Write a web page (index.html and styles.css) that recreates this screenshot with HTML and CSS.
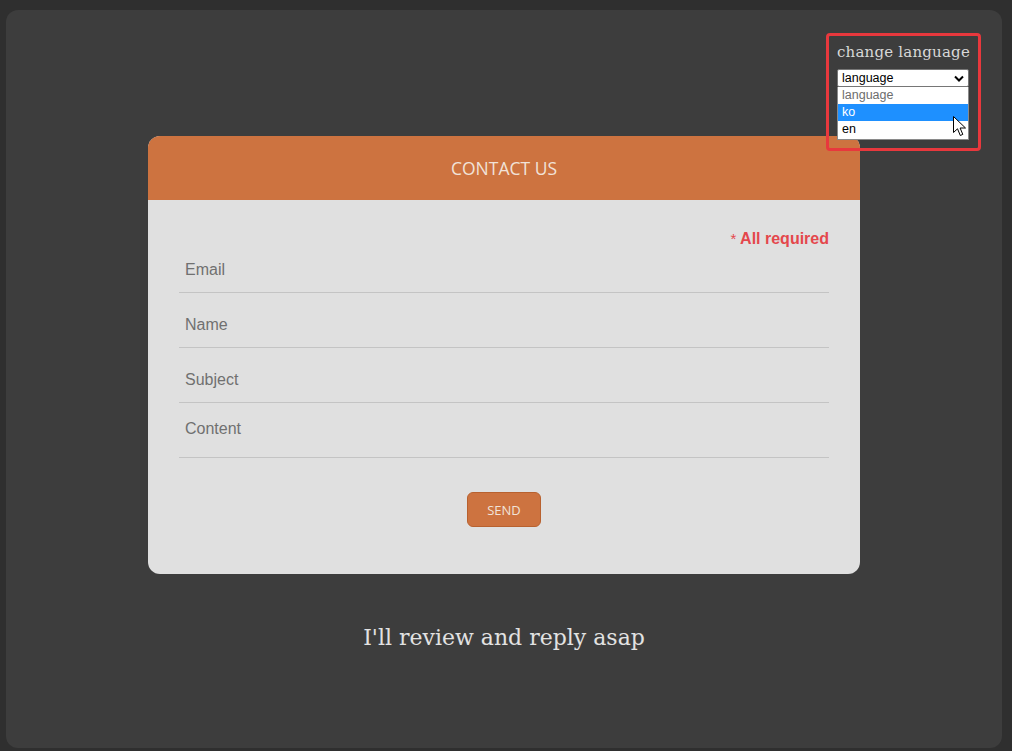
FILE: index.html
```html
<!DOCTYPE html>
<html lang="en">
<head>
<meta charset="utf-8">
<title>Contact</title>
<link rel="stylesheet" href="styles.css">
</head>
<body>
<div class="page">
  <div class="lang">
    <div class="lang-title">change language</div>
    <div class="select">
      <span>language</span>
      <svg class="chev" width="10" height="7" viewBox="0 0 10 7"><path d="M1 1.5 L5 5.5 L9 1.5" fill="none" stroke="#000" stroke-width="2"/></svg>
    </div>
    <div class="options">
      <div class="opt opt-muted">language</div>
      <div class="opt opt-sel">ko</div>
      <div class="opt">en</div>
    </div>
    <svg class="cursor" width="14" height="21" viewBox="0 0 14 21"><path d="M0.5 0.5 L0.5 16.5 L4.5 12.8 L7.3 19.5 L9.8 18.4 L7.1 12 L12.5 12 Z" fill="#fff" stroke="#000" stroke-width="1" stroke-linejoin="round"/></svg>
  </div>

  <div class="card">
    <div class="card-head">CONTACT US</div>
    <div class="card-body">
      <div class="required"><span class="star">*</span> All required</div>
      <div class="field">Email</div>
      <div class="field">Name</div>
      <div class="field">Subject</div>
      <div class="field field-area">Content</div>
      <div class="actions"><button class="send">SEND</button></div>
    </div>
  </div>

  <p class="note">I'll review and reply asap</p>
</div>
</body>
</html>
```
FILE: styles.css
```css
html, body { margin: 0; padding: 0; }
body {
  background: #2f2f2f;
  padding: 10px 10px 3px 6px;
  font-family: "Liberation Sans", Arial, sans-serif;
}
.page {
  position: relative;
  box-sizing: border-box;
  height: 738px;
  background: #3d3d3d;
  border-radius: 12px;
  padding-top: 126px;
  display: flex;
  flex-direction: column;
  align-items: center;
}
.lang {
  position: absolute;
  top: 23px;
  right: 21px;
  width: 149px;
  height: 112px;
  border: 3px solid #e8383d;
  border-radius: 4px;
}
.lang-title {
  font-family: "DejaVu Serif", serif;
  font-size: 15px;
  font-weight: 500;
  color: #d8d8d8;
  margin: 7px 0 0 8px;
  letter-spacing: 0.2px;
  line-height: 18px;
}
.select {
  margin: 8px 0 0 8px;
  width: 132px;
  height: 18px;
  box-sizing: border-box;
  background: #fff;
  border: 1px solid #767676;
  border-radius: 2px;
  display: flex;
  align-items: center;
  justify-content: space-between;
  padding: 0 4px 0 4px;
  font-size: 12.5px;
  color: #000;
}
.options {
  margin-left: 8px;
  width: 132px;
  box-sizing: border-box;
  background: #fff;
  border: 1px solid #8a8a8a;
  border-top: none;
  padding-bottom: 1px;
}
.opt {
  height: 17px;
  line-height: 17px;
  padding-left: 4px;
  font-size: 12.5px;
  color: #000;
}
.opt-muted { color: #6d6d6d; }
.opt-sel { background: #1e90ff; color: #fff; }
.cursor {
  position: absolute;
  left: 124px;
  top: 80px;
}
.card {
  width: 712px;
  border-radius: 12px;
  overflow: hidden;
  background: #e0e0e0;
}
.card-head {
  height: 64px;
  background: #cd7340;
  color: #f1e2d8;
  font-family: "Open Sans", sans-serif;
  font-size: 17.5px;
  display: flex;
  align-items: center;
  justify-content: center;
}
.card-body {
  padding: 28px 31px 47px;
}
.required {
  text-align: right;
  color: #e4474c;
  font-weight: bold;
  font-size: 16px;
  line-height: 21px;
  margin-bottom: -1px;
}
.star { font-weight: normal; font-size: 15px; }
.field {
  height: 44px;
  border-bottom: 1px solid #c4c4c4;
  padding-left: 6px;
  font-size: 16px;
  color: #707070;
  display: flex;
  align-items: center;
  margin-bottom: 10px;
}
.field-area {
  align-items: flex-start;
  padding-top: 7px;
  height: 37px;
}
.actions {
  display: flex;
  justify-content: center;
  margin-top: 34px;
}
.send {
  width: 74px;
  height: 35px;
  background: #cd7340;
  border: 1px solid #b8612f;
  border-radius: 6px;
  color: #f1e2d8;
  font-family: "Open Sans", sans-serif;
  font-size: 13px;
  padding: 0;
}
.note {
  margin: 51px 0 0;
  font-family: "DejaVu Serif", serif;
  font-size: 22px;
  color: #e2e2e2;
}
```
